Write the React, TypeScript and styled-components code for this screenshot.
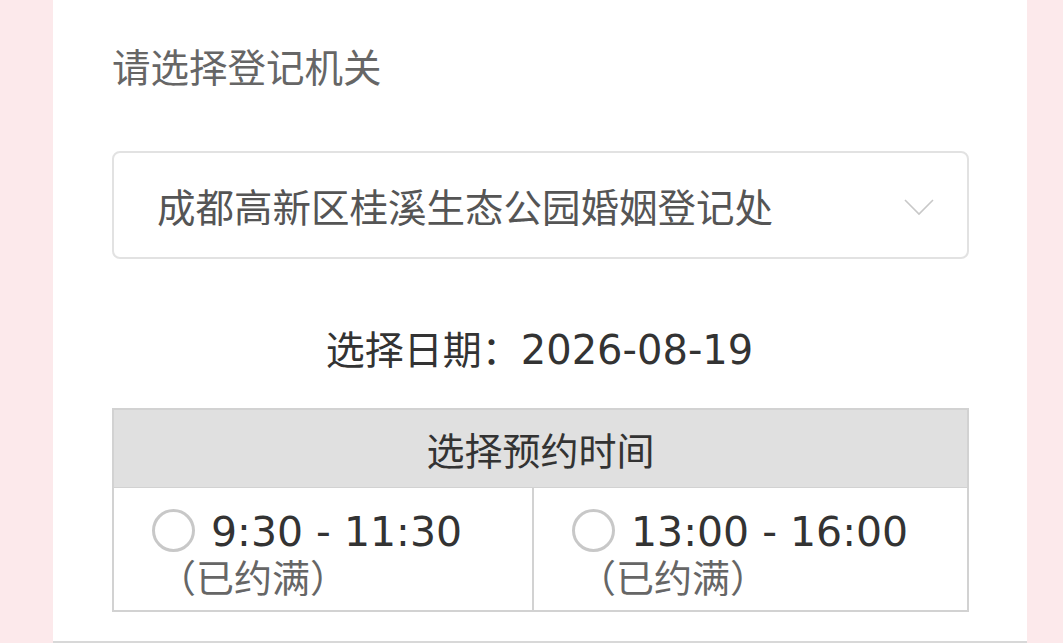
import styled, { createGlobalStyle } from 'styled-components';

const GlobalStyle = createGlobalStyle`
  html, body {
    margin: 0;
    padding: 0;
    background: #fce9eb;
  }
  body {
    font-family: "DejaVu Sans", "Noto Sans CJK SC", sans-serif;
  }
`

interface Slot {
  time: string
  full: boolean
}

const slots: Slot[] = [
  { time: '9:30 - 11:30', full: true },
  { time: '13:00 - 16:00', full: true },
]

export default function App() {
  return (
    <>
      <GlobalStyle />
      <Page>
        <Panel>
          <Label>请选择登记机关</Label>
          <Select>
            <SelectText>成都高新区桂溪生态公园婚姻登记处</SelectText>
            <Chevron viewBox="0 0 32 20">
              <path d="M2 3 L16 17 L30 3" fill="none" stroke="#c8c8c8" strokeWidth="1.6" />
            </Chevron>
          </Select>
          <DateLine>选择日期：<Digits>2026-08-19</Digits></DateLine>
          <Table>
            <TableHead>选择预约时间</TableHead>
            <SlotRow>
              {slots.map(slot => (
                <SlotCell key={slot.time}>
                  <Radio />
                  <SlotTime>{slot.time}</SlotTime>
                  {slot.full && <SlotNote>（已约满）</SlotNote>}
                </SlotCell>
              ))}
            </SlotRow>
          </Table>
          <BottomRule />
        </Panel>
      </Page>
    </>
  )
}

const Page = styled.div`
  width: 1063px;
  height: 643px;
  overflow: hidden;
  padding-left: 53px;
  box-sizing: border-box;
`

const Panel = styled.div`
  width: 974px;
  height: 643px;
  background: #fff;
  box-sizing: border-box;
  padding: 40px 58px 0 59px;
  display: flex;
  flex-direction: column;
`

const Label = styled.div`
  font-size: 38.5px;
  line-height: 58px;
  color: #666;
`

const Select = styled.div`
  margin-top: 53px;
  height: 108px;
  box-sizing: border-box;
  border: 2px solid #e2e2e2;
  border-radius: 8px;
  display: flex;
  align-items: center;
  padding: 0 32px 0 43px;
`

const SelectText = styled.div`
  flex: 1;
  font-size: 38.5px;
  color: #555;
`

const Chevron = styled.svg`
  width: 32px;
  height: 20px;
  margin-top: 3px;
`

const DateLine = styled.div`
  margin-top: 62px;
  text-align: center;
  font-size: 39px;
  line-height: 58px;
  color: #333;
  padding-right: 2px;
`

const Digits = styled.span`
  font-size: 40px;
`

const Table = styled.div`
  margin-top: 28px;
  border: 2px solid #d2d2d2;
  display: flex;
  flex-direction: column;
`

const TableHead = styled.div`
  height: 77px;
  background: #e0e0e0;
  display: flex;
  align-items: center;
  justify-content: center;
  font-size: 38px;
  color: #333;
`

const SlotRow = styled.div`
  display: grid;
  grid-template-columns: 419fr 436fr;
  height: 122px;
  border-top: 1px solid #d2d2d2;
`

const SlotCell = styled.div`
  padding: 21px 0 0 38px;
  line-height: 46px;
  & + & {
    border-left: 2px solid #d2d2d2;
  }
`

const Radio = styled.span`
  display: inline-block;
  width: 37px;
  height: 37px;
  border: 3px solid #c8c8c8;
  border-radius: 50%;
  vertical-align: -6px;
  margin-right: 16px;
`

const SlotTime = styled.span`
  font-size: 41px;
  color: #333;
`

const SlotNote = styled.div`
  font-size: 38px;
  line-height: 40px;
  color: #666;
  margin: -5px 0 0 6px;
`

const BottomRule = styled.div`
  margin: auto -58px 0 -59px;
  height: 2px;
  background: #d8d8d8;
`
